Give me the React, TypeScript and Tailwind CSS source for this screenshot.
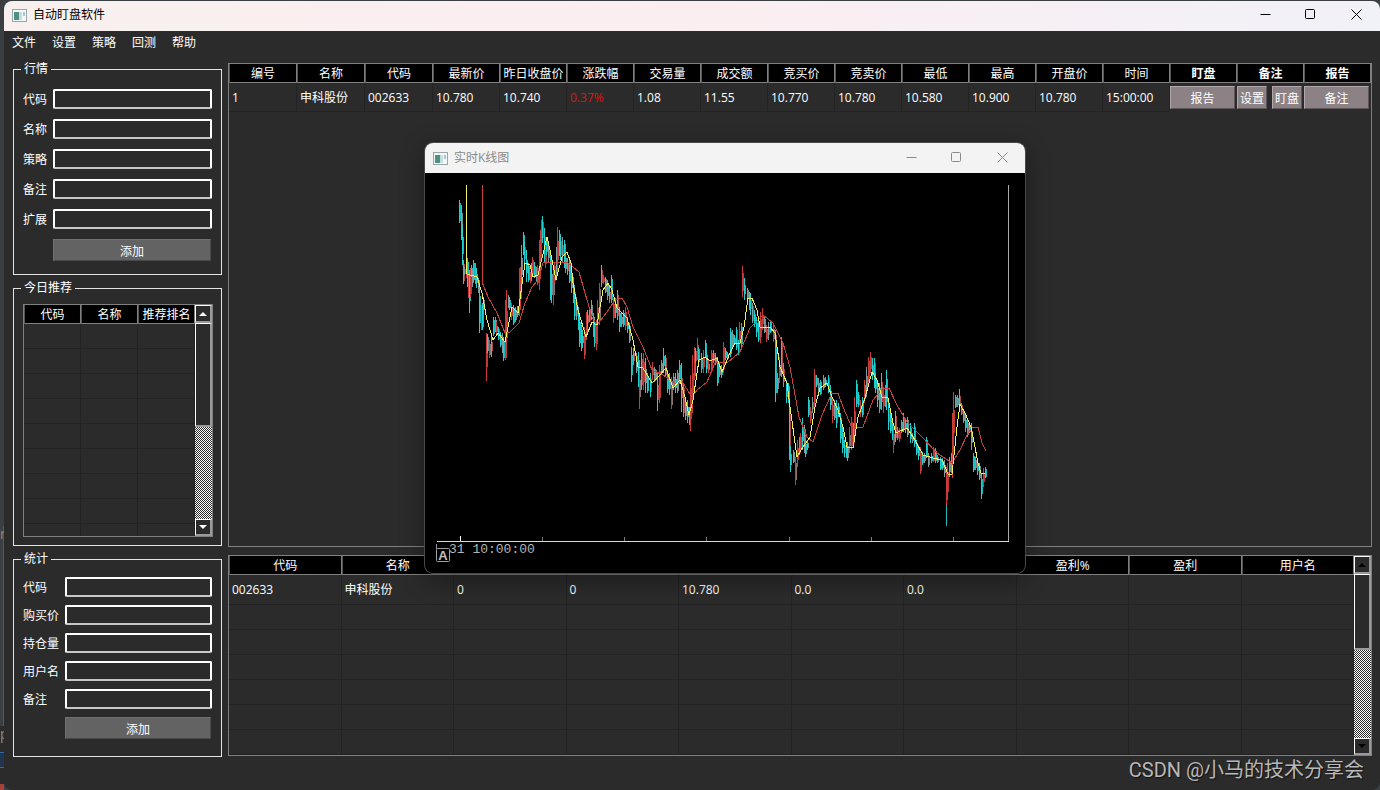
import React from "react";

type Candle = [x: number, high: number, low: number, kind: "c" | "r" | "g"];

const CANDLES: Candle[] = [
  [459, 200, 223, "c"], [461, 205, 240, "c"], [462, 225, 265, "c"], [463, 260, 284, "c"],
  [464, 267, 275, "g"], [466, 267, 278, "r"], [467, 258, 287, "c"], [468, 275, 298, "r"],
  [469, 270, 313, "c"], [470, 268, 297, "r"], [471, 265, 277, "c"], [472, 270, 287, "g"],
  [473, 260, 282, "c"], [475, 263, 284, "g"], [476, 268, 288, "c"], [478, 278, 293, "g"],
  [479, 285, 333, "c"], [481, 305, 330, "r"], [482, 303, 330, "c"], [483, 297, 312, "g"],
  [486, 333, 381, "r"], [487, 334, 353, "c"], [489, 340, 358, "r"], [491, 335, 357, "c"],
  [493, 317, 336, "c"], [495, 317, 332, "g"], [496, 322, 335, "r"], [498, 327, 340, "c"],
  [500, 332, 347, "c"], [502, 333, 353, "g"], [503, 337, 361, "c"], [505, 300, 360, "r"],
  [506, 290, 358, "r"], [508, 295, 308, "g"], [509, 297, 310, "c"], [511, 303, 320, "r"],
  [513, 305, 325, "c"], [515, 307, 322, "g"], [517, 306, 317, "g"], [519, 268, 316, "r"],
  [520, 267, 307, "r"], [521, 245, 287, "g"], [523, 232, 255, "c"], [524, 242, 263, "c"],
  [526, 250, 282, "c"], [528, 263, 282, "c"], [530, 272, 283, "r"], [531, 263, 281, "c"],
  [532, 257, 277, "r"], [534, 262, 278, "c"], [536, 267, 282, "g"], [537, 265, 285, "r"],
  [539, 240, 290, "r"], [540, 230, 270, "r"], [541, 220, 243, "r"], [542, 216, 243, "c"],
  [544, 228, 263, "c"], [545, 237, 268, "r"], [546, 237, 255, "c"], [548, 243, 263, "g"],
  [550, 250, 300, "c"], [551, 265, 303, "c"], [553, 270, 305, "r"], [554, 263, 283, "r"],
  [556, 247, 280, "g"], [557, 227, 273, "r"], [559, 230, 256, "c"], [560, 235, 260, "c"],
  [562, 237, 263, "g"], [564, 240, 268, "c"], [565, 253, 273, "g"], [567, 258, 275, "c"],
  [569, 260, 283, "c"], [571, 268, 293, "c"], [573, 277, 303, "c"], [574, 287, 320, "c"],
  [576, 297, 320, "g"], [578, 307, 330, "c"], [579, 317, 347, "c"], [581, 325, 351, "c"],
  [582, 330, 348, "c"], [584, 327, 359, "r"], [586, 312, 340, "r"], [587, 310, 327, "c"],
  [589, 307, 322, "g"], [591, 300, 320, "c"], [593, 313, 337, "g"], [594, 317, 347, "c"],
  [596, 320, 350, "r"], [597, 300, 327, "r"], [599, 283, 325, "r"], [601, 265, 287, "c"],
  [603, 275, 284, "r"], [605, 277, 293, "c"], [607, 280, 300, "g"], [609, 287, 303, "c"],
  [611, 275, 303, "c"], [613, 298, 323, "r"], [615, 298, 318, "g"], [617, 290, 320, "c"],
  [619, 307, 332, "c"], [621, 313, 327, "g"], [623, 310, 327, "c"], [625, 307, 330, "r"],
  [627, 317, 333, "c"], [629, 323, 343, "c"], [631, 347, 382, "c"], [633, 348, 365, "c"],
  [636, 353, 373, "g"], [638, 352, 387, "c"], [639, 367, 409, "r"], [641, 353, 390, "c"],
  [643, 353, 390, "r"], [645, 358, 393, "c"], [647, 373, 393, "c"], [650, 373, 397, "c"],
  [652, 362, 380, "r"], [654, 367, 382, "g"], [656, 370, 380, "g"], [657, 373, 411, "c"],
  [659, 365, 403, "r"], [661, 360, 375, "g"], [663, 348, 373, "c"], [665, 355, 377, "c"],
  [667, 370, 393, "c"], [669, 373, 395, "c"], [671, 377, 409, "r"], [673, 373, 390, "g"],
  [675, 373, 393, "c"], [677, 370, 393, "g"], [679, 360, 383, "c"], [681, 363, 412, "c"],
  [683, 383, 417, "g"], [685, 397, 420, "c"], [687, 400, 423, "c"], [689, 407, 425, "c"],
  [690, 375, 431, "r"], [692, 355, 413, "r"], [694, 347, 380, "r"], [695, 348, 363, "c"],
  [697, 338, 360, "r"], [698, 347, 363, "c"], [701, 353, 373, "g"], [703, 350, 373, "r"],
  [705, 340, 357, "c"], [706, 350, 373, "c"], [708, 360, 373, "r"], [711, 350, 373, "r"],
  [713, 350, 363, "g"], [715, 353, 365, "c"], [717, 357, 386, "c"], [719, 363, 377, "g"],
  [721, 365, 378, "c"], [723, 342, 373, "r"], [725, 348, 360, "c"], [727, 352, 360, "g"],
  [730, 328, 357, "c"], [732, 330, 348, "g"], [734, 335, 345, "c"], [736, 327, 350, "c"],
  [738, 340, 355, "c"], [739, 322, 352, "r"], [741, 323, 347, "g"], [742, 266, 297, "r"],
  [744, 278, 300, "c"], [747, 288, 300, "g"], [749, 292, 310, "c"], [750, 293, 315, "c"],
  [752, 303, 323, "g"], [754, 310, 327, "c"], [756, 317, 337, "c"], [758, 320, 342, "c"],
  [760, 312, 343, "r"], [762, 308, 330, "r"], [764, 317, 333, "g"], [766, 325, 342, "r"],
  [768, 322, 340, "g"], [770, 320, 333, "c"], [773, 325, 342, "r"], [775, 330, 347, "c"],
  [775, 337, 402, "c"], [777, 373, 393, "g"], [779, 357, 383, "r"], [781, 337, 377, "c"],
  [783, 363, 387, "g"], [786, 380, 403, "c"], [788, 383, 403, "c"], [789, 400, 460, "c"],
  [790, 446, 472, "c"], [793, 450, 463, "c"], [795, 457, 485, "r"], [797, 440, 467, "r"],
  [799, 437, 455, "g"], [800, 433, 452, "r"], [802, 418, 450, "c"], [804, 425, 453, "g"],
  [805, 440, 457, "c"], [807, 440, 450, "c"], [808, 397, 417, "c"], [810, 407, 423, "r"],
  [812, 397, 413, "g"], [814, 369, 407, "r"], [816, 375, 387, "c"], [818, 378, 395, "g"],
  [820, 380, 395, "c"], [823, 375, 390, "g"], [825, 377, 387, "c"], [828, 375, 393, "c"],
  [830, 385, 410, "c"], [832, 397, 423, "r"], [834, 400, 420, "g"], [836, 400, 428, "c"],
  [838, 403, 417, "c"], [840, 413, 443, "c"], [842, 427, 453, "c"], [844, 440, 457, "c"],
  [846, 447, 458, "c"], [847, 442, 461, "c"], [849, 427, 453, "r"], [851, 417, 450, "r"],
  [853, 423, 443, "g"], [854, 397, 443, "r"], [856, 380, 407, "c"], [858, 392, 407, "c"],
  [860, 400, 417, "r"], [862, 397, 417, "c"], [864, 380, 403, "r"], [866, 367, 397, "g"],
  [868, 357, 383, "r"], [870, 352, 373, "r"], [872, 358, 380, "c"], [874, 358, 388, "c"],
  [875, 373, 393, "c"], [877, 380, 407, "c"], [879, 383, 413, "g"], [881, 373, 410, "c"],
  [883, 387, 413, "r"], [885, 385, 407, "g"], [886, 370, 410, "c"], [888, 400, 430, "c"],
  [890, 413, 433, "c"], [892, 420, 440, "c"], [893, 425, 453, "r"], [895, 411, 442, "c"],
  [897, 427, 440, "g"], [899, 428, 442, "r"], [901, 420, 433, "g"], [903, 413, 432, "c"],
  [905, 418, 433, "c"], [907, 417, 437, "c"], [910, 423, 443, "c"], [912, 433, 443, "g"],
  [914, 423, 447, "c"], [916, 440, 455, "c"], [918, 445, 460, "c"], [920, 447, 474, "r"],
  [922, 452, 465, "c"], [924, 453, 463, "g"], [926, 437, 458, "c"], [928, 453, 467, "g"],
  [931, 453, 463, "c"], [933, 447, 462, "r"], [935, 448, 463, "c"], [937, 455, 463, "g"],
  [940, 457, 470, "c"], [942, 458, 470, "c"], [944, 460, 477, "g"], [946, 467, 505, "r"],
  [947, 463, 500, "r"], [949, 457, 477, "c"], [951, 453, 473, "g"], [952, 413, 478, "r"],
  [953, 392, 450, "r"], [955, 395, 408, "c"], [957, 395, 407, "g"], [959, 389, 412, "c"],
  [961, 403, 415, "g"], [963, 410, 423, "c"], [965, 415, 432, "c"], [967, 420, 437, "g"],
  [969, 423, 433, "c"], [971, 423, 450, "c"], [973, 453, 472, "c"], [975, 457, 470, "g"],
  [977, 460, 475, "c"], [979, 463, 480, "c"], [981, 473, 499, "c"], [983, 468, 487, "r"],
  [985, 467, 478, "c"],
];

const SHORT_AVERAGE =
  "466,185 466,257 467,274 477,277 482,293 487,320 493,340 498,333 505,342 512,307 518,313 525,263 530,265 533,277 538,275 547,237 550,250 556,280 562,257 567,252 571,263 573,283 578,310 586,337 592,322 597,325 603,290 608,283 612,290 617,308 622,313 627,318 633,340 638,367 643,368 652,383 660,375 666,368 673,388 680,380 685,397 689,415 693,400 699,360 705,357 710,361 717,358 722,372 730,353 735,343 740,343 744,327 748,298 752,298 757,310 760,327 770,327 775,333 780,367 787,383 790,407 797,457 803,447 810,437 815,407 820,388 827,383 832,397 838,410 843,427 847,447 853,448 858,417 865,398 872,372 877,380 882,397 888,398 893,423 896,433 907,428 915,440 923,455 933,458 942,460 948,474 952,474 957,427 960,404 965,413 971,427 975,447 978,463 981,473 985,473";

const LONG_AVERAGE =
  "482,185 482,282 488,297 497,313 505,333 510,332 519,323 525,303 532,287 538,280 543,263 557,262 568,263 579,272 585,293 592,317 597,325 607,312 615,300 622,298 627,307 633,327 643,347 652,370 663,375 675,383 683,383 692,397 697,390 707,382 715,363 728,362 740,352 750,328 763,315 773,323 783,343 790,367 799,417 807,437 813,442 822,415 832,393 838,393 843,407 852,428 863,427 873,400 883,388 889,388 897,405 907,422 920,435 937,453 952,463 960,450 968,433 973,427 978,427 982,443 986,451";

const TICKS = [542, 624, 706, 789, 871, 953];

const wickColors = { c: "#1fd0d0", r: "#cc3a3a", g: "#7f9c9c" };
// bodies cycle through up, down and flat bars so the trend reads as mixed trading
const bodyColors = {
  c: ["#12b9bd", "#6f8f8f", "#12b9bd", "#a84848"],
  r: ["#c03434", "#c03434", "#8a7676", "#c03434"],
  g: ["#b04040", "#7d8a8a", "#3fa5a5", "#8a7676"],
};

const QUOTE_COLUMNS = [
  "编号", "名称", "代码", "最新价", "昨日收盘价", "涨跌幅", "交易量", "成交额",
  "竞买价", "竞卖价", "最低", "最高", "开盘价", "时间",
];
const ACTION_COLUMNS = ["盯盘", "备注", "报告"];
const QUOTE = [
  "1", "申科股份", "002633", "10.780", "10.740", "0.37%", "1.08", "11.55",
  "10.770", "10.780", "10.580", "10.900", "10.780", "15:00:00",
];

const STAT_COLUMNS = ["代码", "名称", "", "", "", "", "", "盈利%", "盈利", "用户名"];
const STATS = ["002633", "申科股份", "0", "0", "10.780", "0.0", "0.0", "", "", ""];

const headCell =
  "h-[19px] overflow-hidden border-r border-b border-l border-r-[#808080] border-b-[#808080] border-l-[#555] bg-black p-0 pt-0.5 text-center leading-4 whitespace-nowrap";
const bodyCell = "border-r border-b border-[#232323] py-0 pr-0 pl-[3px] leading-4 whitespace-nowrap";

const AppIcon = () => (
  <svg width="15" height="13" viewBox="0 0 15 13" aria-hidden="true">
    <rect x="0.5" y="0.5" width="14" height="12" fill="#f4f8f8" stroke="#9aa5ab" />
    <rect x="2" y="3" width="5" height="8" fill="#4f8f84" />
    <rect x="7" y="3" width="3" height="8" fill="#c3dedb" />
    <rect x="11" y="3" width="2" height="4" fill="#a9c4cc" />
  </svg>
);

const WindowButtons = ({ closeLabel }: { closeLabel: string }) => (
  <div className="flex h-full pb-0.5">
    <button aria-label="最小化" className="flex w-[46px] items-center justify-center">
      <svg width="11" height="11" viewBox="0 0 11 11" stroke="currentColor" fill="none">
        <path d="M0.5 5.5H10.5" />
      </svg>
    </button>
    <button aria-label="最大化" className="flex w-[45px] items-center justify-center">
      <svg width="11" height="11" viewBox="0 0 11 11" stroke="currentColor" fill="none">
        <rect x="0.5" y="0.5" width="9" height="9" rx="1" />
      </svg>
    </button>
    <button aria-label={closeLabel} className="flex w-[46px] items-center justify-center">
      <svg width="11" height="11" viewBox="0 0 11 11" stroke="currentColor" fill="none">
        <path d="M0.5 0.5L10.5 10.5M10.5 0.5L0.5 10.5" />
      </svg>
    </button>
  </div>
);

const Group = ({
  title,
  className,
  children,
}: {
  title: string;
  className: string;
  children: React.ReactNode;
}) => (
  <fieldset className={`min-w-0 border border-[#e4e4e4] px-[9px] ${className}`}>
    <legend className="-ml-0.5 px-[3px] leading-3">{title}</legend>
    {children}
  </fieldset>
);

const Field = ({ id, label }: { id: string; label: string }) => (
  <>
    <label htmlFor={id} className="self-center pt-0.5 leading-4">
      {label}
    </label>
    <input
      id={id}
      type="text"
      className="h-5 w-full min-w-0 rounded-[2px] border-2 border-white border-b-[#c8c8c8] bg-transparent px-1 outline-none"
    />
  </>
);

const AddButton = () => (
  <button className="col-start-2 mr-px h-[22px] border border-t-[#707070] border-r-[#4a4a4a] border-b-[#4a4a4a] border-l-[#707070] bg-[#636363] pt-1 leading-4">
    添加
  </button>
);

const ScrollBar = ({ thumb, arrow }: { thumb: string; arrow: string }) => {
  const box =
    "shrink-0 border-t border-r-2 border-b-2 border-l border-t-white border-r-[#9a9a9a] border-b-[#9a9a9a] border-l-white bg-[#2b2b2b]";
  return (
    <div className="flex w-[17px] shrink-0 flex-col bg-[conic-gradient(#fff_25%,#2b2b2b_0_50%,#fff_0_75%,#2b2b2b_0)] bg-[length:2px_2px]">
      <button aria-label="向上" className={`flex h-[18px] items-center justify-center ${box} ${arrow}`}>
        <svg width="8" height="4" viewBox="0 0 8 4" fill="currentColor">
          <path d="M4 0L8 4H0Z" />
        </svg>
      </button>
      <div className={`${thumb} ${box}`} />
      <button aria-label="向下" className={`mt-auto flex h-[17px] items-center justify-center ${box} ${arrow}`}>
        <svg width="8" height="4" viewBox="0 0 8 4" fill="currentColor">
          <path d="M0 0H8L4 4Z" />
        </svg>
      </button>
    </div>
  );
};

const Recommendations = () => (
  <div className="-mr-px flex h-[233px] overflow-hidden border border-[#808080]">
    <table className="w-full table-fixed border-separate border-spacing-0 self-start">
      <thead>
        <tr>
          {["代码", "名称", "推荐排名"].map((name) => (
            <th key={name} className={`${headCell} font-normal`}>
              {name}
            </th>
          ))}
        </tr>
      </thead>
      <tbody>
        {Array.from({ length: 9 }, (_, row) => (
          <tr key={row} className="h-[25px]">
            <td className={bodyCell} />
            <td className={bodyCell} />
            <td className={bodyCell} />
          </tr>
        ))}
      </tbody>
    </table>
    <ScrollBar thumb="h-[104px]" arrow="text-white" />
  </div>
);

const CellButton = ({ children, className }: { children: string; className: string }) => (
  <button
    className={`h-[23px] border border-t-[#b0a8ab] border-r-[#5e575a] border-b-[#5e575a] border-l-[#b0a8ab] bg-[#8c8286] pt-0.5 leading-4 ${className}`}
  >
    {children}
  </button>
);

const Quotes = () => (
  <div className="min-h-0 flex-1 border border-[#808080]">
    <table className="w-full table-fixed border-separate border-spacing-0">
      <colgroup>
        <col span={3} className="w-[68px]" />
        <col span={14} />
      </colgroup>
      <thead>
        <tr>
          {QUOTE_COLUMNS.map((name) => (
            <th key={name} className={`${headCell} font-normal`}>
              {name}
            </th>
          ))}
          {ACTION_COLUMNS.map((name) => (
            <th key={name} className={`${headCell} font-bold`}>
              {name}
            </th>
          ))}
        </tr>
      </thead>
      <tbody>
        <tr className="h-[29px]">
          {QUOTE.map((value, i) => (
            <td key={i} className={`pt-0.5 ${bodyCell} ${i === 5 ? "text-[#e01010]" : ""}`}>
              {value}
            </td>
          ))}
          <td className="p-0 pr-0.5">
            <CellButton className="block w-full">报告</CellButton>
          </td>
          <td className="p-0 pr-0.5">
            <div className="flex justify-between">
              <CellButton className="w-[30px]">设置</CellButton>
              <CellButton className="w-[30px]">盯盘</CellButton>
            </div>
          </td>
          <td className="p-0 pr-0.5">
            <CellButton className="block w-full">备注</CellButton>
          </td>
        </tr>
      </tbody>
    </table>
  </div>
);

const Statistics = () => (
  <div className="flex border border-[#808080]">
    <table className="w-full table-fixed border-separate border-spacing-0">
      <thead>
        <tr>
          {STAT_COLUMNS.map((name, i) => (
            <th key={i} className={`${headCell} font-normal`}>
              {name}
            </th>
          ))}
        </tr>
      </thead>
      <tbody>
        <tr className="h-[30px]">
          {STATS.map((value, i) => (
            <td key={i} className={bodyCell}>
              {value}
            </td>
          ))}
        </tr>
        {Array.from({ length: 6 }, (_, row) => (
          <tr key={row} className="h-[25px]">
            {STATS.map((_, i) => (
              <td key={i} className={bodyCell} />
            ))}
          </tr>
        ))}
      </tbody>
    </table>
    <ScrollBar thumb="h-[76px]" arrow="text-black" />
  </div>
);

const Chart = () => (
  <svg viewBox="425 173 600 400" className="block w-full" shapeRendering="crispEdges" fill="none">
    {CANDLES.map(([x, high, low, kind], i) => {
      const inset = Math.round((low - high) * (0.15 + (i % 3) * 0.08));
      return (
        <g key={i}>
          <path d={`M${x + 1.5} ${high + inset}V${low - inset + 1}`} stroke={bodyColors[kind][i % 4]} />
          <path d={`M${x + 0.5} ${high}V${low}`} stroke={wickColors[kind]} />
        </g>
      );
    })}
    <path d="M946.5 505V526" stroke="#1fb8b8" />
    <polyline points={LONG_AVERAGE} stroke="#c94040" />
    <polyline points={SHORT_AVERAGE} stroke="#f2f25a" />
    <path d="M437 541.5H1009" stroke="#d8d8d8" />
    <path d="M1008.5 185V541" stroke="#a8a8a8" />
    <path d="M460.5 536V541" stroke="#fff" />
    {TICKS.map((x) => (
      <path key={x} d={`M${x + 0.5} 537V541`} stroke="#777" />
    ))}
    <path d="M436.5 544V549" stroke="#999" />
    <text x="449" y="553" fill="#b4b4b4" fontSize="13" fontFamily="Liberation Mono, monospace">
      31 10:00:00
    </text>
    <rect x="436.5" y="548.5" width="13" height="13" rx="1" fill="#000" stroke="#a0a0a0" shapeRendering="auto" />
    <text x="443" y="560" fill="#c0c0c0" fontSize="13" fontWeight="bold" textAnchor="middle" fontFamily="Liberation Sans, sans-serif">
      A
    </text>
  </svg>
);

const ChartWindow = () => (
  <section
    aria-label="实时K线图"
    className="absolute top-[143px] left-[425px] w-[600px] overflow-hidden rounded-lg bg-black shadow-[0_0_0_1px_#484848,0_6px_24px_rgba(0,0,0,0.4)]"
  >
    <header className="flex h-[30px] items-center bg-[#f3f3f3] pl-2 text-[#8a8a8a]">
      <AppIcon />
      <h2 className="ml-1.5 flex-1 leading-4">实时K线图</h2>
      <WindowButtons closeLabel="关闭图表" />
    </header>
    <Chart />
  </section>
);

// sliver of the editor window that shows behind the left edge
const Backdrop = () => (
  <div aria-hidden="true" className="flex w-1 shrink-0 flex-col justify-end overflow-hidden">
    <div className="h-[200px] border-r border-[#55585a] text-sm leading-4 text-[#8a8d8f]">n</div>
    <div className="h-[26px] bg-[#2b2b2b] text-sm leading-4 text-[#8a8d8f]">p</div>
    <div className="h-4 border-y border-[#2f6aa8] bg-[#1f3550]" />
    <div className="h-4 bg-[#2b2b2b]" />
    <div className="h-1.5 bg-[#a8403c]" />
  </div>
);

export default function App() {
  return (
    <div className="relative flex min-h-screen bg-[#3c3f41] pt-px font-['Open_Sans','Noto_Sans_CJK_SC',sans-serif] text-xs text-white">
      <Backdrop />
      <div className="flex min-w-0 flex-1 flex-col overflow-hidden rounded-lg bg-[#2b2b2b]">
        <header className="flex h-[30px] items-center bg-linear-to-r from-[#f8f0ef] via-[#fbeef1] to-[#f1f1f8] pr-px pb-0.5 pl-2 text-black">
          <AppIcon />
          <h1 className="ml-1.5 flex-1 leading-4">自动盯盘软件</h1>
          <WindowButtons closeLabel="关闭" />
        </header>
        <nav className="flex h-8 gap-4 px-2 pt-1">
          {["文件", "设置", "策略", "回测", "帮助"].map((item) => (
            <button key={item} className="h-4 leading-4">
              {item}
            </button>
          ))}
        </nav>
        <main className="flex flex-1 items-start gap-1.5 pr-2 pb-[33px] pl-[9px]">
          <aside className="flex w-[209px] shrink-0 flex-col gap-[7px]">
            <Group title="行情" className="pt-3.5 pb-[13px]">
              <form className="grid grid-cols-[30px_1fr] gap-y-2.5">
                <Field id="quote-code" label="代码" />
                <Field id="quote-name" label="名称" />
                <Field id="quote-strategy" label="策略" />
                <Field id="quote-note" label="备注" />
                <Field id="quote-extra" label="扩展" />
                <AddButton />
              </form>
            </Group>
            <Group title="今日推荐" className="pt-2.5 pb-2">
              <Recommendations />
            </Group>
            <Group title="统计" className="pt-3 pb-[17px]">
              <form className="grid grid-cols-[42px_1fr] gap-y-2">
                <Field id="stat-code" label="代码" />
                <Field id="stat-price" label="购买价" />
                <Field id="stat-volume" label="持仓量" />
                <Field id="stat-user" label="用户名" />
                <Field id="stat-note" label="备注" />
                <AddButton />
              </form>
            </Group>
          </aside>
          <div className="flex min-w-0 flex-1 flex-col gap-2 self-stretch pb-px">
            <Quotes />
            <Statistics />
          </div>
        </main>
      </div>
      <ChartWindow />
      <p className="absolute right-4 bottom-1.5 font-[Roboto,'Noto_Sans_CJK_SC',sans-serif] text-xl leading-7 text-[#b8b8b8] [text-shadow:1px_1px_1px_#111]">
        CSDN @小马的技术分享会
      </p>
    </div>
  );
}
